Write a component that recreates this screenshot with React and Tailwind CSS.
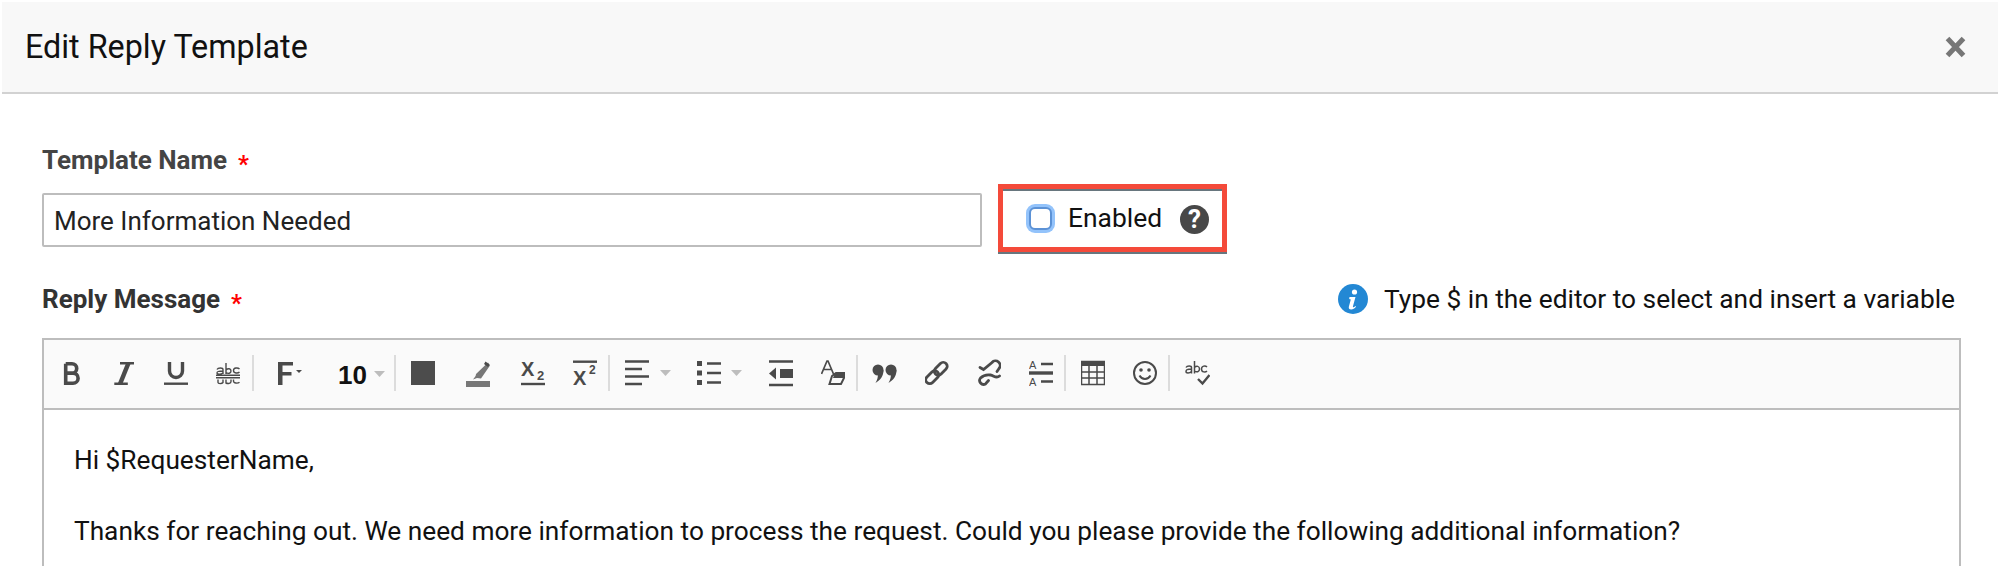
import React from "react";

const c = "#4a4a4a";
const S = ({ children, className = "", w = 24 }) => (
  <svg width={w} height="30" viewBox={`0 0 ${w} 30`} fill="none" className={`shrink-0 ${className}`}>{children}</svg>
);
const Caret = ({ className = "" }) => (
  <svg width="11" height="6" viewBox="0 0 11 6" className={`shrink-0 ${className}`}><path d="M0 0h11L5.5 6z" fill="#bdbdbd" /></svg>
);
const Sep = ({ className = "" }) => <div className={`w-[2px] h-[36px] bg-[#dcdcdc] shrink-0 ${className}`} />;

export default function App() {
  return (
    <div className="w-[1998px] h-[566px] overflow-hidden bg-white pt-[2px] pl-[2px] font-['Roboto',sans-serif] text-[#111]">
      <header className="h-[92px] bg-[#f8f8f8] border-b-2 border-[#d2d2d2] flex items-center justify-between pl-[23px] pr-[32px]">
        <h1 className="text-[32.300px] leading-none font-normal text-[#111]">Edit Reply Template</h1>
        <svg width="21" height="22" viewBox="0 0 21 22"><path d="M2.500 2.500l16 17M18.500 2.500l-16 17" stroke="#777" strokeWidth="5" /></svg>
      </header>

      <main className="pl-[40px] pr-[37px]">
        <div className="h-[30px] mt-[51px] flex items-center text-[26px] font-bold text-[#444] leading-none">
          Template Name<span className="text-[#f00] ml-[11px] mt-[8px] text-[24px]">*</span>
        </div>
        <div className="mt-[18px] h-[54px] flex items-start">
          <div className="w-[940px] h-[54px] border-2 border-[#bdbdbd] rounded-[2px] flex items-center pl-[10px] pt-[2px] text-[26px] text-[#222]">
            More Information Needed
          </div>
          <div className="ml-[16px] -mt-[9px] w-[229px] h-[68px] border-[5px] border-[#f44a3a] shadow-[inset_0_2px_0_#67767e,0_2px_0_#67767e] flex items-center pl-[26px]">
            <span className="w-[23px] h-[23px] rounded-[6px] border-2 border-[#5c92d6] bg-white shadow-[0_0_0_3px_#93c3fb]" />
            <span className="ml-[16px] text-[26.400px] leading-none text-[#111]">Enabled</span>
            <span className="ml-[18px] w-[29px] h-[29px] rounded-full bg-[#484848] text-white font-bold text-[26px] leading-none flex items-center justify-center mt-[2px]">?</span>
          </div>
        </div>
        <div className="mt-[37px] h-[30px] flex items-center justify-between pr-[6px]">
          <div className="flex items-center text-[26px] font-bold text-[#333] leading-none">
            Reply Message<span className="text-[#f00] ml-[11px] mt-[8px] text-[24px]">*</span>
          </div>
          <div className="flex items-center text-[26.300px] leading-none text-[#111]">
            <svg width="30" height="30" viewBox="0 0 30 30" className="mr-[16px]">
              <circle cx="15" cy="15" r="15" fill="#2388d4" />
              <circle cx="16.500" cy="8" r="2.600" fill="#fff" />
              <path d="M11.500 13h6l-2.600 9.500c-.2.8.6 1 1.300.5l1.300-1 .5.7c-1.500 1.800-3 2.800-4.800 2.800-2 0-2.800-1.100-2.300-2.900l1.900-7.200-1.600-.4z" fill="#fff" />
            </svg>
            Type $ in the editor to select and insert a variable
          </div>
        </div>

        <div className="mt-[24px] h-[300px] border-2 border-[#bdbdbd]">
          <div className="h-[70px] bg-[#fafafa] border-b-2 border-[#bdbdbd] flex items-center pl-[16px] pb-[2px]">
            {/* bold */}
            <S><path d="M5.700 5.700H12a4.700 4.700 0 0 1 0 9.400H5.700M12 15.100h1a5 5 0 0 1 0 10.200H5.700V5.700" stroke={c} strokeWidth="3.600" /></S>
            {/* italic */}
            <S className="ml-[28px]"><path d="M8 5.200h14M2.300 25.800h13.500" stroke={c} strokeWidth="2.600" /><path d="M16.500 5L8 26" stroke={c} strokeWidth="4.500" /></S>
            {/* underline */}
            <S className="ml-[28px]"><path d="M5.500 4v9a6.500 6.500 0 0 0 13 0V4" stroke={c} strokeWidth="3.400" /><path d="M0 25.700h24" stroke={c} strokeWidth="2.400" /></S>
            {/* strike abc */}
            <S className="ml-[28px]"><path d="M1 11.500c1-2 6-2 6 0v4.500M7 13c-5 0-6 .5-6 2 0 1.500 4 1.500 6 0M10 5v11M10 12c2-2 5-1.500 5 1s-3 3-5 1.500M23.500 11c-1.500-1.500-6-1.500-6 1.500s4.500 3 6 1.500M0 17.300h24M0 19.700h24M2 21.500v3c0 1.500 4 1.500 5 0v-3M10 21.500v3.500c2 1 5 .5 5-1.500v-2M17.500 21.500v1.500c0 2.500 4.500 2.500 6 1.200" stroke={c} strokeWidth="1.400" /></S>
            <Sep className="ml-[12px]" />
            {/* F */}
            <svg width="24" height="30" viewBox="0 0 24 30" className="ml-[24px] shrink-0"><path d="M0 4h15v3.500H4.500v6.500H13.500v3.500H4.500V27H0z" fill={c} /><path d="M18 12h6l-3 3z" fill={c} /></svg>
            <span className="ml-[36px] w-[28px] font-['Liberation_Sans',sans-serif] font-bold text-[26px] leading-none text-[#111] mt-[4px]">10</span>
            <Caret className="ml-[8px] mt-[2px]" />
            <Sep className="ml-[9px]" />
            {/* square */}
            <S className="ml-[15px]"><rect x="0" y="3" width="24" height="24" fill="#4c4c4c" /></S>
            {/* highlighter */}
            <S className="ml-[31px]"><rect x="0" y="23" width="24" height="6" fill="#777" /><path d="M22 4.500l2 3-9 13-4-.5-4 1.500c2-2.500 3-4 3-5.500z" fill="#777" /><path d="M19.500 3.500l4 3-1.500 2.500-4-3z" fill="#4a4a4a" /></S>
            {/* subscript */}
            <S className="ml-[31px]"><text x="0" y="18" fontFamily="Liberation Sans" fontWeight="700" fontSize="20" fill={c}>X</text><text x="16" y="22" fontFamily="Liberation Sans" fontWeight="700" fontSize="13" fill={c}>2</text><path d="M0 26h24" stroke={c} strokeWidth="2.400" /></S>
            {/* superscript */}
            <S className="ml-[28px]"><path d="M0 3.700h24" stroke={c} strokeWidth="2.400" /><text x="0" y="27" fontFamily="Liberation Sans" fontWeight="700" fontSize="20" fill={c}>X</text><text x="16" y="15.500" fontFamily="Liberation Sans" fontWeight="700" fontSize="12" fill={c}>2</text></S>
            <Sep className="ml-[11px]" />
            {/* align */}
            <S className="ml-[15px]"><path d="M0 3.500h24M0 11h17M0 18.500h24M0 26h17" stroke={c} strokeWidth="2.600" /></S>
            <Caret className="ml-[11px]" />
            {/* list */}
            <S className="ml-[26px]"><rect x="0" y="3" width="5" height="5" fill={c} /><rect x="0" y="12.500" width="5" height="5" fill={c} /><rect x="0" y="22" width="5" height="5" fill={c} /><path d="M10 5.500h14M10 15h14M10 24.500h14" stroke={c} strokeWidth="2.600" /></S>
            <Caret className="ml-[10px]" />
            {/* outdent */}
            <S className="ml-[27px]"><path d="M0 3.500h24M0 27h24" stroke={c} strokeWidth="2.600" /><path d="M0 15.500l7-6v12z" fill={c} /><rect x="11" y="11" width="13" height="9" fill={c} /></S>
            {/* clear format */}
            <S className="ml-[28px]"><path d="M0.500 16L6 3h1l5.500 13M2.500 11.500h8" stroke={c} strokeWidth="1.700" /><path d="M11 18l4-3h9l-1 5-3 6H8.500z" stroke={c} strokeWidth="2" fill="none" /><path d="M14 15h10l-1 5H12z" fill={c} /></S>
            <Sep className="ml-[11px]" />
            {/* quote */}
            <S className="ml-[14px]" w={25}><circle cx="6" cy="12" r="5.500" fill={c} /><circle cx="19" cy="12" r="5.500" fill={c} /><path d="M11.500 12c0 6-3 10-8 13 2-3.500 2.500-6 2.500-10zM24.500 12c0 6-3 10-8 13 2-3.500 2.500-6 2.500-10z" fill={c} /></S>
            {/* link */}
            <S className="ml-[28px]"><g transform="rotate(-45 11.500 15)" stroke={c} strokeWidth="2.800"><rect x="-2" y="11" width="15" height="8" rx="4" /><rect x="10" y="11" width="15" height="8" rx="4" /></g></S>
            {/* unlink */}
            <S className="ml-[28px]"><g stroke={c} strokeWidth="2.800" strokeLinecap="round"><path d="M3 9.500L6.500 11.500L15 4.500A4.500 4.500 0 0 1 22 10.500L20 13.500" /><path d="M22.500 18C19 21 17 17.500 13.500 17C10 16.500 6 17.500 3.500 20A4 4 0 0 0 8.500 26L11.500 22.500" /></g></S>
            {/* line height */}
            <S className="ml-[28px]"><text x="0" y="11" fontFamily="Liberation Sans" fontSize="11" fill={c}>A</text><text x="0" y="28" fontFamily="Liberation Sans" fontSize="11" fill={c}>A</text><path d="M12 6h12M12 23.500h12" stroke={c} strokeWidth="2.600" /><path d="M0 15h24" stroke={c} strokeWidth="3.400" /></S>
            <Sep className="ml-[11px]" />
            {/* table */}
            <S className="ml-[15px]"><rect x="0.500" y="3.500" width="23" height="23" stroke={c} strokeWidth="1.500" /><rect x="0" y="3" width="24" height="5" fill={c} /><path d="M8 8v18M16 8v18M0 14h24M0 20h24" stroke={c} strokeWidth="1.500" /></S>
            {/* smile */}
            <S className="ml-[28px]"><circle cx="12" cy="15" r="11" stroke={c} strokeWidth="2" /><circle cx="8" cy="12" r="1.800" fill={c} /><circle cx="16" cy="12" r="1.800" fill={c} /><path d="M6.500 17.500c2.500 4.500 8.500 4.500 11 0" stroke={c} strokeWidth="2" /></S>
            <Sep className="ml-[11px]" />
            {/* spellcheck */}
            <S className="ml-[15px]" w={25}><path d="M1 9.500c1-2 5.500-2 5.500 0v6M6.500 11c-4.500 0-5.500 .5-5.500 2.500 0 2 3.500 2 5.500 0M9.500 3v12.500M9.500 9.500c2-2 5-1.500 5 1.500s-3 3.500-5 2M22 9c-1.500-1.500-5.500-1.500-5.500 2s4 3.500 5.500 2" stroke={c} strokeWidth="1.500" /><path d="M13 21l4.500 4.500L24.500 17" stroke={c} strokeWidth="2.400" /></S>
          </div>
          <div className="pl-[30px] pt-[32px] text-[26.250px] leading-[36px] text-[#111]">
            <p>Hi $RequesterName,</p>
            <p className="mt-[35px]">Thanks for reaching out. We need more information to process the request. Could you please provide the following additional information?</p>
          </div>
        </div>
      </main>
    </div>
  );
}
